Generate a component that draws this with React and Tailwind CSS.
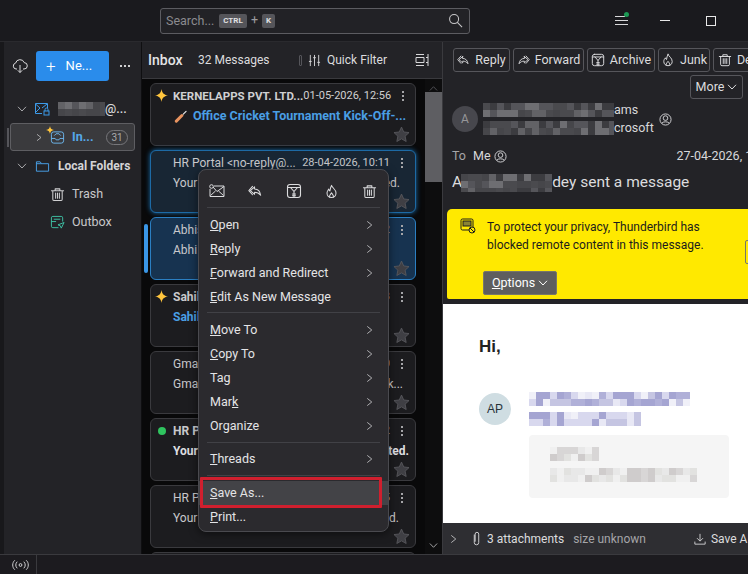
import React from "react";

const S = (p) => <svg viewBox="0 0 16 16" fill="none" stroke="currentColor" strokeWidth="1.1" strokeLinejoin="round" strokeLinecap="round" {...p} />;

const ReplyI = (p) => <S {...p}><path d="M7 3 2.500 7 7 11V8.800c2.800 0 4.700.9 6.500 3.200C13 8 10.800 5.500 7 5.300z" /><path d="M4.800 2.500.9 7l3.900 4.500" /></S>;
const ForwardI = (p) => <S {...p}><path d="M9 3l4.500 4L9 11V8.800c-2.800 0-4.700.9-6.500 3.200C3 8 5.200 5.500 9 5.300z" /><path d="M11.200 2.500 15.100 7l-3.900 4.500" /></S>;
const ArchiveI = (p) => <S {...p}><rect x="1.500" y="1.500" width="13" height="13" rx="2.500" /><path d="M1.500 4.500h13M4.500 4.500 8 8.500l3.500-4M8 8.500v6" /><path d="M6.500 11h3M6.500 12.800h3" /></S>;
const JunkI = (p) => <S {...p}><path d="M8 1.500c.6 2.500 4.800 4 4.800 8.200 0 2.800-2 4.800-4.800 4.800s-4.800-2-4.800-4.800c0-2 1-3 1.800-4.200.3 1.200.8 1.700 1.300 2C6.500 5.500 7 3.500 8 1.500z" /><path d="M6 14c-.6-2 1-3 2-4.500 1 1.500 2.600 2.500 2 4.500" /></S>;
const TrashI = (p) => <S {...p}><path d="M1.500 4h13M5.500 4V2h5v2M3 4v9a1.500 1.500 0 0 0 1.500 1.500h7A1.500 1.500 0 0 0 13 13V4M6 6.500v5.500M8 6.500v5.500M10 6.500v5.500" /></S>;
const Chevron = ({ dir = "right", className = "" }) => (
  <svg viewBox="0 0 10 10" fill="none" stroke="currentColor" strokeWidth="1" className={className}>
    {dir === "right" && <path d="M2.500 1 7.500 5l-5 4" />}
    {dir === "down" && <path d="M1 2.800 5 7l4-4.200" />}
  </svg>
);
const Star = ({ className = "" }) => (
  <svg viewBox="0 0 16 16" className={className}><path d="M8 1l2.100 4.600 5 .6-3.700 3.400 1 5L8 12.100 3.600 14.600l1-5L.9 6.200l5-.6z" fill="#3f3f44" stroke="#5a5a5f" strokeWidth=".8" /></svg>
);
const Spark = ({ className = "" }) => (
  <svg viewBox="0 0 12 12" className={className}><path d="M6 0c.5 3.500 2 5.300 6 6-4 .7-5.500 2.500-6 6-.5-3.500-2-5.300-6-6 4-.7 5.500-2.500 6-6z" fill="#ffc53d" /></svg>
);
const Bat = ({ className = "" }) => (
  <svg viewBox="0 0 14 14" className={className} fill="none" strokeLinecap="round"><path d="M2.500 12 8.500 6" stroke="#e8935f" strokeWidth="3.200" /><path d="M10 4.500 13 1.500" stroke="#e6e6e6" strokeWidth="1.300" /></svg>
);
const Dots = () => (
  <span className="flex flex-col gap-[2px] w-[2px]">
    <i className="block w-[2px] h-[2px] bg-[#a5a5a8]" /><i className="block w-[2px] h-[2px] bg-[#a5a5a8]" /><i className="block w-[2px] h-[2px] bg-[#a5a5a8]" />
  </span>
);
const Person = ({ className = "" }) => (
  <svg viewBox="0 0 14 14" className={className} fill="none" stroke="currentColor" strokeWidth="1"><circle cx="7" cy="7" r="6" /><circle cx="7" cy="5.500" r="2.500" /><path d="M3 11c1-2 7-2 8 0" /></svg>
);

function Mosaic({ w, h, cell = 7, colors, seed = 3, className = "" }) {
  const cols = Math.ceil(w / cell), rows = Math.ceil(h / cell);
  const out = [];
  let v = seed * 7919;
  for (let y = 0; y < rows; y++) for (let x = 0; x < cols; x++) {
    v = (v * 1103515245 + 12345) & 0x7fffffff;
    const c = colors[(v >> 8) % colors.length];
    out.push(<rect key={x + "-" + y} x={x * cell} y={y * cell} width={cell} height={cell} fill={c} />);
  }
  return <svg width={w} height={h} viewBox={`0 0 ${w} ${h}`} className={`block shrink-0 ${className}`}>{out}</svg>;
}

function Card({ variant = "plain", lead, sender, date, subjLeft, subjRight, subjClass = "text-[#c9c9cc] text-[12px]", senderClass = "text-[#c9c9cc]", endClass = "mr-[3px]" }) {
  const v = {
    plain: "bg-[#1c1c1f] border-[#3a3a3e]",
    focus: "bg-[#182634] border-[#1d6aa5] shadow-[0_0_5px_#1a6fb0]",
    sel: "bg-[#173350] border-[#2b7fc2]",
  }[variant];
  return (
    <div className={`h-[63px] shrink-0 rounded-[6px] border pl-[22px] pr-[12px] pt-[3px] relative ${v}`}>
      {lead && <span className="absolute left-[4px] top-[5px] w-[13px] h-[13px] flex items-center justify-center">{lead}</span>}
      <div className="flex items-center justify-between h-[18px] text-[12px] whitespace-nowrap">
        <span className={`text-[12px] ${senderClass}`}>{sender}</span>
        <span className="flex items-center gap-[11px]"><span className={`text-[11px] ${senderClass}`}>{date}</span><Dots /></span>
      </div>
      <div className={`flex justify-between mt-[2px] h-[18px] items-center whitespace-nowrap ${subjClass}`}>
        <span>{subjLeft}</span><span className={endClass}>{subjRight}</span>
      </div>
      <Star className="absolute right-[5px] bottom-[2px] w-[17px] h-[17px]" />
    </div>
  );
}

const MItem = ({ label, u, arrow, hi }) => {
  const i = label.indexOf(u);
  return (
    <div className={`h-[24px] flex items-center justify-between pl-[11px] pr-[14px] text-[12.500px] text-[#e4e4e6] ${hi ? "bg-[#434347]" : ""}`}>
      <span>{u ? <>{label.slice(0, i)}<u>{u}</u>{label.slice(i + u.length)}</> : label}</span>
      {arrow && <Chevron className="w-[9px] h-[12px] text-[#bdbdc0]" />}
    </div>
  );
};
const Hr = ({ c = "my-[3px]" }) => <div className={`h-px mx-[8px] bg-[#414146] ${c}`} />;

const TBtn = ({ icon, label, w }) => (
  <div className={`h-[24px] shrink-0 rounded-[3px] border border-[#56565b] flex items-center justify-center gap-[5px] text-[12.500px] text-[#dcdcde] ${w}`}>
    {icon}<span>{label}</span>
  </div>
);

const gray = ["#3c3c40", "#4a4a4e", "#55555a", "#626266", "#6e6e72", "#46464a"];
const lav = ["#d8d8ee", "#c5c5e2", "#b0b0d8", "#e8e8f5", "#a5a5d2", "#f0f0f8"];
const pale = ["#e8e8e8", "#d8d6d6", "#f0f0f0", "#cfcccc", "#e2e2e0"];

export default function App() {
  return (
    <div className="w-[748px] h-[574px] overflow-hidden relative bg-[#1c1b1f] flex flex-col text-[#d8d8da] [font-family:Roboto,'Noto_Sans',sans-serif] [&_svg]:shrink-0">
      {/* Title bar */}
      <div className="h-[42px] shrink-0 bg-[#1a1a1e] relative flex items-center border-b border-[#2a2a2e]">
        <div className="ml-[160px] w-[310px] h-[26px] rounded-[3px] border border-[#5c5c61] bg-[#222226] flex items-center pl-[5px] pr-[6px] text-[12.500px] text-[#8b8b8f]">
          <span className="w-[53px] pt-[1px]">Search...</span>
          <span className="h-[14px] w-[28px] rounded-[2px] bg-[#55555a] text-[8px] font-bold text-[#e0e0e2] flex items-center justify-center">CTRL</span>
          <span className="mx-[4px] text-[#9a9a9e]">+</span>
          <span className="h-[14px] w-[13px] rounded-[2px] bg-[#55555a] text-[8px] font-bold text-[#e0e0e2] flex items-center justify-center">K</span>
          <svg viewBox="0 0 16 16" className="ml-auto w-[15px] h-[15px]" fill="none" stroke="#c8c8ca" strokeWidth="1.100"><circle cx="6.500" cy="6.500" r="4.800" /><path d="m10 10 5 5" /></svg>
        </div>
        <div className="ml-[145px] w-[13px] flex flex-col gap-[3px] relative">
          <i className="block h-px w-[10px] bg-[#d8d8da]" /><i className="block h-px w-[13px] bg-[#d8d8da]" /><i className="block h-px w-[13px] bg-[#d8d8da]" />
          <i className="absolute w-[5px] h-[5px] rounded-full bg-[#1d9a55] -right-[1px] -top-[4px]" />
        </div>
        <i className="block ml-[32px] w-[10px] h-px bg-[#e8e8e8]" />
        <i className="block ml-[36px] w-[10px] h-[10px] border border-[#e8e8e8]" />
      </div>

      <div className="flex-1 min-h-0 flex">
        <div className="w-[4px] shrink-0 bg-[#18181b]" />
        {/* Sidebar */}
        <div className="w-[137px] shrink-0 bg-[#232327] flex flex-col">
          <div className="h-[30px] mt-[9px] flex items-center relative">
            <svg viewBox="0 0 16 16" className="ml-[8px] w-[16px] h-[16px] text-[#dcdcde]" fill="none" stroke="currentColor" strokeWidth="1"><path d="M5 11H4a3 3 0 0 1-.400-5.900 4.500 4.500 0 0 1 8.600-.5A3.200 3.200 0 0 1 12 11h-1" /><path d="M8 7v7.500M5.800 12.300 8 14.500l2.200-2.200" /></svg>
            <div className="ml-[8px] w-[73px] h-[30px] rounded-[3px] bg-[#2a8ceb] flex items-center pl-[10px] text-[13px] text-white">
              <span className="text-[17px] font-light leading-none mr-[10px]">+</span><span>Ne...</span>
            </div>
            <span className="ml-[11px] flex gap-[2px]"><i className="block w-[2px] h-[2px] bg-[#cfcfd1]" /><i className="block w-[2px] h-[2px] bg-[#cfcfd1]" /><i className="block w-[2px] h-[2px] bg-[#cfcfd1]" /></span>
          </div>
          <div className="h-[28px] mt-[14px] flex items-center pl-[13px] text-[12.500px]">
            <Chevron dir="down" className="w-[10px] h-[10px] text-[#a8a8ab]" />
            <svg viewBox="0 0 16 16" className="ml-[7px] w-[16px] h-[16px] text-[#3d9ae8]" fill="none" stroke="currentColor" strokeWidth="1"><path d="M8 12.500H1.500v-10h12V7" /><path d="m1.500 3 4.500 4-4 4M13 3 8 7" /><rect x="10" y="10" width="5" height="4" /><path d="M11 10V8.500a1.500 1.500 0 0 1 3 0V10" /></svg>
            <Mosaic className="ml-[8px]" w={47} h={14} cell={7} colors={gray} seed={2} />
            <span className="font-medium text-[#d8d8da]">@...</span>
          </div>
          <div className="mx-[6px] h-[28px] rounded-[3px] border border-[#5e5e62] bg-[#3a3a3d] flex items-center pl-[24px] relative text-[12.500px]">
            <i className="absolute -left-[4px] top-[4px] w-[2px] h-[19px] bg-[#55555a]" />
            <Chevron className="w-[8px] h-[11px] text-[#c0c0c2]" />
            <span className="relative ml-[7px]">
              <svg viewBox="0 0 16 16" className="block w-[15px] h-[15px] text-[#6db7ef]" fill="none" stroke="currentColor" strokeWidth="1"><rect x="1.500" y="2" width="13" height="12" rx="2.500" /><path d="M1.500 9h4l1 1.500h3l1-1.500h4M4.500 6l2-2h3l2 2" /></svg>
              <Spark className="absolute -left-[4px] -top-[4px] w-[8px] h-[8px]" />
            </span>
            <span className="ml-[7px] font-bold text-[#55a7e8]">In...</span>
            <span className="ml-auto mr-[6px] h-[15px] w-[22px] rounded-full border border-[#77777b] text-[10px] text-[#a9a9ac] flex items-center justify-center">31</span>
          </div>
          <div className="h-[28px] mt-[1px] flex items-center pl-[13px] text-[12px] font-bold text-[#d4d4d6]">
            <Chevron dir="down" className="w-[10px] h-[10px] text-[#a8a8ab] font-normal" />
            <svg viewBox="0 0 16 16" className="ml-[8px] w-[15px] h-[15px] text-[#4aa3ec]" fill="none" stroke="currentColor" strokeWidth="1"><path d="M1.500 13V3h4l1.500 2h7.500v8z" /><path d="M1.500 5H7" /></svg>
            <span className="ml-[8px]">Local Folders</span>
          </div>
          <div className="h-[28px] flex items-center pl-[46px] text-[12.500px] text-[#c8c8ca]">
            <TrashI className="w-[15px] h-[15px] text-[#d0d0d2]" /><span className="ml-[7px]">Trash</span>
          </div>
          <div className="h-[28px] flex items-center pl-[46px] text-[12.500px] text-[#c8c8ca]">
            <svg viewBox="0 0 16 16" className="w-[15px] h-[15px] text-[#3fc4a8]" fill="none" stroke="currentColor" strokeWidth="1"><path d="M9 13.500H3a1.500 1.500 0 0 1-1.500-1.500V3A1.500 1.500 0 0 1 3 1.500h9A1.500 1.500 0 0 1 13.500 3v4" /><path d="M1.500 7h5M4 4.500h7M15 8l-6.500 2.500 2.500 1 1 2.500z" /></svg>
            <span className="ml-[7px]">Outbox</span>
          </div>
        </div>
        <div className="w-px shrink-0 bg-[#0f0f11]" />

        {/* List */}
        <div className="w-[300px] shrink-0 flex flex-col bg-[#09090a]">
          <div className="h-[37px] shrink-0 bg-[#232327] border-b border-[#3a3a3e] flex items-center pl-[6px] relative">
            <span className="text-[14px] font-medium text-[#e4e4e6]">Inbox</span>
            <span className="absolute left-[56px] text-[12px] text-[#dcdcde]">32 Messages</span>
            <i className="absolute left-[157px] block w-[3px] h-[11px] rounded-[1px] border border-[#55555a]" />
            <svg viewBox="0 0 14 14" className="absolute left-[166px] w-[13px] h-[13px] text-[#d8d8da]" fill="none" stroke="currentColor" strokeWidth="1"><path d="M2.500 1v12M7 1v12M11.500 1v12" /><path d="M1 8h3M5.500 4h3M10 9h3" /></svg>
            <span className="absolute left-[185px] text-[12px] text-[#dcdcde]">Quick Filter</span>
            <svg viewBox="0 0 14 14" className="absolute right-[13px] w-[14px] h-[14px] text-[#d8d8da]" fill="none" stroke="currentColor" strokeWidth="1"><path d="M1 1.500h8M1 12.500h8M13 1v12M1 4.500h8v5H1z" /><path d="M11 4.500h2M11 9.500h2" /></svg>
          </div>
          <div className="flex-1 min-h-0 flex overflow-hidden">
            <div className="w-[283px] shrink-0 pl-[8px] pr-[9px] pt-[4px] flex flex-col gap-[4px] relative overflow-hidden">
              <Card lead={<Spark className="w-[13px] h-[13px]" />} sender={<b className="font-bold text-[11.500px]">KERNELAPPS PVT. LTD...</b>} date="01-05-2026, 12:56" senderClass="text-[#d0d0d2]" subjClass="text-[#4a9fe5] font-bold text-[12.500px]" subjLeft={<span className="flex items-center"><Bat className="mr-[5px] w-[15px] h-[13px]" />Office Cricket Tournament Kick-Off-...</span>} subjRight="" />
              <Card variant="focus" sender="HR Portal <no-reply@..." date="28-04-2026, 10:11" subjLeft="Your leave" subjRight="request is approved." />
              <Card variant="sel" sender="Abhishek" date="27-04-2026, 17:02" subjLeft="Abhi" subjRight="" />
              <Card lead={<Spark className="w-[13px] h-[13px]" />} sender={<b className="font-bold">Sahil</b>} date="26-04-2026, 09:13" subjClass="text-[#4a9fe5] font-bold text-[12px]" subjLeft="Sahil" subjRight="" />
              <Card sender="Gmail" date="25-04-2026, 11:30" subjLeft="Gmail" subjRight="k..." endClass="mr-0" />
              <Card lead={<i className="w-[8px] h-[8px] rounded-full bg-[#2fc45f]" />} sender={<b className="font-bold">HR Portal</b>} date="24-04-2026, 10:22" subjClass="text-[#dedee0] font-bold text-[12px]" subjLeft="Your" subjRight="ted." endClass="-mr-[6px]" />
              <Card sender="HR Portal" date="23-04-2026, 10:15" subjLeft="Your" subjRight="ed." endClass="mr-[4px]" />
              <Card sender="HR Portal" date="22-04-2026, 10:15" subjLeft="Your" subjRight="ed." />
            </div>
            <div className="w-[17px] shrink-0 bg-[#0d0d0e] flex flex-col">
              <Chevron dir="down" className="w-[9px] h-[9px] mx-auto mt-[5px] rotate-180 text-[#55555a]" />
              <div className="h-[90px] mt-[-1px] bg-[#5e5e62]" />
              <div className="flex-1" />
              <Chevron dir="down" className="w-[9px] h-[9px] mx-auto mb-[4px] text-[#b0b0b2]" />
            </div>
          </div>
        </div>
        <div className="w-px shrink-0 bg-[#3a3a3e]" />

        {/* Message */}
        <div className="flex-1 min-w-0 flex flex-col bg-[#232327] overflow-hidden">
          <div className="h-[30px] pt-[6px] pl-[10px] flex gap-[3px] shrink-0">
            <TBtn icon={<ReplyI className="w-[13px] h-[13px]" />} label="Reply" w="w-[57px]" />
            <TBtn icon={<ForwardI className="w-[13px] h-[13px]" />} label="Forward" w="w-[71px]" />
            <TBtn icon={<ArchiveI className="w-[14px] h-[14px]" />} label="Archive" w="w-[68px]" />
            <TBtn icon={<JunkI className="w-[14px] h-[14px]" />} label="Junk" w="w-[52px]" />
            <TBtn icon={<TrashI className="w-[14px] h-[14px]" />} label="Delete" w="w-[64px]" />
          </div>
          <div className="flex justify-end pr-[5px] pt-[3px] shrink-0">
            <div className="h-[24px] w-[53px] rounded-[3px] border border-[#56565b] flex items-center justify-center gap-[3px] text-[12.500px] text-[#dcdcde]">More<Chevron dir="down" className="w-[10px] h-[10px]" /></div>
          </div>
          <div className="h-[40px] pl-[9px] flex items-center shrink-0">
            <div className="w-[26px] h-[26px] rounded-full bg-[#47474d] flex items-center justify-center text-[12px] text-[#96969a]">A</div>
            <div className="ml-[5px] flex flex-col gap-[4px] text-[12.500px] leading-[14px] text-[#d8d8da]">
              <div className="flex items-center"><Mosaic w={131} h={14} cell={7} colors={gray} seed={5} /><span>ams</span></div>
              <div className="flex items-center"><Mosaic w={131} h={14} cell={7} colors={gray} seed={9} /><span>crosoft</span></div>
            </div>
            <Person className="ml-[5px] w-[13px] h-[13px] text-[#d8d8da]" />
          </div>
          <div className="h-[20px] mt-[7px] pl-[9px] flex items-center text-[12.500px] whitespace-nowrap shrink-0">
            <span className="text-[#a5a5a8]">To</span><span className="ml-[7px]">Me</span>
            <Person className="ml-[3px] w-[13px] h-[13px] text-[#d8d8da]" />
            <span className="ml-[170px]">27-04-2026, 17:02</span>
          </div>
          <div className="h-[28px] mt-[3px] pl-[9px] flex items-center text-[15.500px] text-[#dcdcde] whitespace-nowrap shrink-0">
            <span>A</span><Mosaic w={91} h={18} cell={7} colors={gray} seed={13} className="-ml-[1px]" /><span>dey sent a message</span>
          </div>
          <div className="h-[90px] mt-[12px] ml-[4px] shrink-0 bg-[#ffe900] rounded-tl-[5px] rounded-bl-[2px] relative pl-[40px] pt-[9px] text-[12px] leading-[18px] text-[#1c1c1c]">
            <svg viewBox="0 0 16 16" className="absolute left-[13px] top-[9px] w-[16px] h-[16px]" fill="none" stroke="#1c1c1c" strokeWidth="1"><rect x="1" y="1" width="12" height="11" rx="1.500" /><rect x="3" y="3" width="8" height="5" fill="#8a8434" /><circle cx="12" cy="12" r="3" fill="#ffe900" /><path d="m10 10 4 4" /></svg>
            <div>To protect your privacy, Thunderbird has</div>
            <div>blocked remote content in this message.</div>
            <div className="absolute left-[36px] top-[62px] w-[74px] h-[24px] rounded-[2px] bg-[#5e5e5e] border border-[#77776a] flex items-center justify-center gap-[3px] text-[12.500px] text-white"><span><u>O</u>ptions</span><Chevron dir="down" className="w-[10px] h-[10px]" /></div>
            <div className="absolute -right-[3px] top-[31px] w-[6px] h-[24px] rounded-[2px] border border-[#77776a]" />
          </div>
          <div className="h-[5px] bg-[#232327] shrink-0" />
          <div className="flex-1 min-h-0 bg-white text-[#222] pl-[36px] pt-[32px] [font-family:'Liberation_Sans',sans-serif]">
            <div className="text-[17px] font-bold leading-[22px] text-[#222]">Hi,</div>
            <div className="flex mt-[34px]">
              <div className="w-[32px] h-[32px] mt-[1px] rounded-full bg-[#cfdde2] flex items-center justify-center text-[12px] text-[#27333a]">AP</div>
              <div className="ml-[18px] flex flex-col">
                <Mosaic w={161} h={14} cell={7} colors={lav} seed={4} />
                <Mosaic w={112} h={14} cell={7} colors={lav} seed={8} className="mt-[6px]" />
                <div className="mt-[9px] w-[200px] h-[63px] rounded-[4px] bg-[#f5f5f5] pl-[21px] pt-[12px]">
                  <Mosaic w={49} h={14} cell={7} colors={pale} seed={6} />
                  <Mosaic w={147} h={14} cell={7} colors={pale} seed={11} className="mt-[7px]" />
                </div>
              </div>
            </div>
          </div>
          <div className="h-[31px] shrink-0 bg-[#2e2e32] flex items-center pl-[6px] text-[12px] whitespace-nowrap">
            <Chevron className="w-[9px] h-[12px] text-[#c0c0c2]" />
            <svg viewBox="0 0 10 18" className="ml-[14px] w-[9px] h-[16px] text-[#dcdcde]" fill="none" stroke="currentColor" strokeWidth="1"><path d="M2.500 4v9a2.500 2.500 0 0 0 5 0V3.500a2 2 0 0 0-4 0V12" /></svg>
            <span className="ml-[6px] text-[#dcdcde]">3 attachments</span>
            <span className="ml-[9px] text-[#a5a5a8]">size unknown</span>
            <svg viewBox="0 0 14 14" className="ml-[48px] w-[12px] h-[12px] text-[#dcdcde]" fill="none" stroke="currentColor" strokeWidth="1"><path d="M7 1v8M3.500 6 7 9.500 10.500 6M1 10v3h12v-3" /></svg>
            <span className="ml-[5px] text-[#dcdcde]">Save All</span>
          </div>
        </div>
      </div>

      {/* Status bar */}
      <div className="h-[20px] shrink-0 bg-[#1c1b1f] border-t border-[#3a3a3e] flex">
        <div className="w-[33px] ml-[4px] border-r border-[#3a3a3e] flex items-center justify-center text-[#d8d8da]">
          <svg viewBox="0 0 18 12" className="w-[17px] h-[12px]" fill="none" stroke="currentColor" strokeWidth="1"><circle cx="9" cy="6" r="1.500" /><path d="M5.500 2.500c-2 2-2 5 0 7M12.500 2.500c2 2 2 5 0 7M3 1c-3 2.500-3 7.500 0 10M15 1c3 2.500 3 7.500 0 10" /></svg>
        </div>
      </div>

      {/* Context menu */}
      <div className="absolute left-[198px] top-[169px] w-[191px] h-[363px] rounded-[8px] border border-[#4a4a4f] bg-[#2b2a2e] shadow-[0_2px_8px_rgba(0,0,0,0.5)] pt-[12px]">
        <div className="h-[18px] flex items-center justify-between pl-[10px] pr-[11px] text-[#dcdcde]">
          <svg viewBox="0 0 16 14" className="w-[16px] h-[14px]" fill="none" stroke="currentColor" strokeWidth="1"><circle cx="2.500" cy="2.500" r="1.800" /><path d="M5 2h10v10.500H1V5M1.500 11.500 6.500 7M14.500 11.500 9.500 7M4 3l4 4.500L15 2.500" /></svg>
          <ReplyI className="w-[15px] h-[15px]" />
          <ArchiveI className="w-[16px] h-[16px]" />
          <JunkI className="w-[15px] h-[15px]" />
          <TrashI className="w-[15px] h-[15px]" />
        </div>
        <Hr c="mt-[7px] mb-[5px]" />
        <MItem label="Open" u="O" arrow />
        <MItem label="Reply" u="R" arrow />
        <MItem label="Forward and Redirect" u="F" arrow />
        <MItem label="Edit As New Message" u="E" />
        <Hr c="mt-[3px] mb-[5px]" />
        <MItem label="Move To" u="M" arrow />
        <MItem label="Copy To" u="C" arrow />
        <MItem label="Tag" arrow />
        <MItem label="Mark" u="k" arrow />
        <MItem label="Organize" arrow />
        <Hr c="mt-[4px] mb-[4px]" />
        <MItem label="Threads" u="T" arrow />
        <Hr c="mt-[4px] mb-[5px]" />
        <div className="relative">
          <MItem label="Save As..." u="S" hi />
          <div className="absolute left-[1px] top-[-4px] w-[182px] h-[31px] border-[3px] border-[#d01f2e] rounded-[1px]" />
        </div>
        <MItem label="Print..." u="P" />
      </div>
      <i className="absolute left-[144px] top-[224px] w-[4px] h-[49px] rounded-[2px] bg-[#3a96e6]" />
    </div>
  );
}
